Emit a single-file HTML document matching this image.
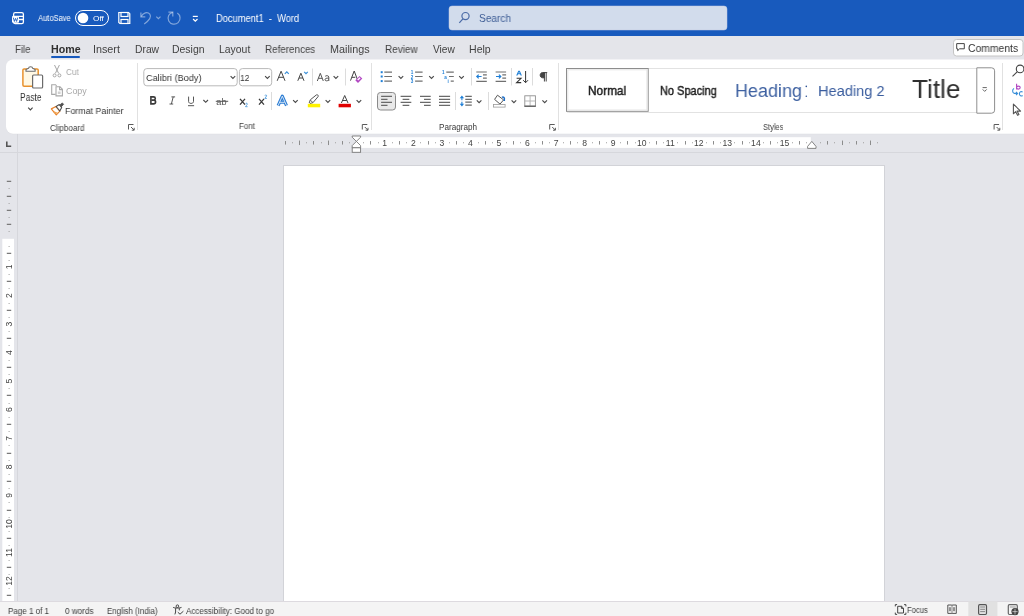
<!DOCTYPE html>
<html><head><meta charset="utf-8"><style>
html,body{margin:0;padding:0}
body{width:1024px;height:616px;overflow:hidden;position:relative;background:#e4e5ea;font-family:"Liberation Sans",sans-serif}
.t{position:absolute;line-height:1;white-space:nowrap;transform-origin:0 0;will-change:transform}
svg{position:absolute;left:0;top:0;will-change:transform}
</style></head><body>
<svg width="1024" height="616" viewBox="0 0 1024 616">
<!-- title bar -->
<rect x="0" y="0" width="1024" height="36" fill="#185abd"/>
<!-- word icon -->
<g fill="none" stroke="#fff" stroke-width="1.3">
<rect x="13.6" y="12.6" width="9.8" height="11" rx="1.6"/>
<path d="M13.6 16.3H23.4M13.6 19.5H23.4"/>
</g>
<rect x="12" y="16" width="7" height="6.8" rx="1" fill="#fff"/>
<path d="M13.3 17.6l1.1 3.8 1.1-3 1.1 3 1.1-3.8" fill="none" stroke="#185abd" stroke-width="0.9"/>
<!-- toggle -->
<rect x="75.5" y="10.5" width="33" height="15" rx="7.5" fill="none" stroke="#fff" stroke-width="1"/>
<circle cx="83" cy="18" r="5.3" fill="#fff"/>
<!-- save -->
<g fill="none" stroke="#fff" stroke-width="1.2">
<path d="M118.8 12.5H128.6L129.8 13.7V23.5H119.9L118.8 22.4Z"/>
<rect x="121" y="12.5" width="7" height="4"/>
<rect x="121" y="19.5" width="7" height="4"/>
</g>
<!-- undo -->
<g fill="none" stroke="#fff" stroke-opacity="0.45" stroke-width="1.2">
<path d="M140.9 12.4V16.8H145.3"/>
<path d="M141.2 16.5C143 12.8 147.5 11.3 149.8 14.2C151.8 16.8 149.5 20 144.2 24"/>
<path d="M156.3 16.6L158.4 18.7L160.5 16.6"/>
<path d="M172.8 12.3A6 6 0 1 0 177.3 13.1"/>
<path d="M168.4 12.1H172.8V16.5"/>
</g>
<g fill="none" stroke="#fff" stroke-width="1.2">
<path d="M192.8 16.4H197.8"/>
<path d="M193.1 19L195.3 21.2L197.5 19"/>
</g>
<!-- search box -->
<rect x="449" y="6" width="278" height="24" rx="3" fill="#d2dcec" stroke="#c0cbe0" stroke-width="0.5"/>
<g fill="none" stroke="#4a6aa6" stroke-width="1.2">
<circle cx="465.5" cy="16.1" r="3.6"/>
<path d="M462.9 18.8L459.3 22.9"/>
</g>

<!-- comments button -->
<rect x="953.5" y="39.5" width="69.5" height="16.5" rx="3" fill="#fff" stroke="#c4c4c4"/>
<path d="M956.7 43.6H964.3V48.8H959.6L957.7 50.6V48.8H956.7Z" fill="none" stroke="#444" stroke-width="1"/>
<!-- home underline -->
<rect x="51" y="56" width="29" height="2" rx="1" fill="#185abd"/>



<!-- ribbon card shadow -->
<rect x="6" y="60" width="1030" height="74.3" rx="7" fill="#dcdde1"/>
<rect x="6" y="59.4" width="1030" height="74.4" rx="7" fill="#fff"/>
<!-- group separators -->
<g stroke="#e1e1e1" stroke-width="1">
<path d="M137.5 63V130M371.5 63V130M558.5 63V130M1002.5 63V130"/>
</g>
<g stroke="#dcdcdc" stroke-width="1">
<path d="M312.5 68.5V85.5M345.5 68.5V85.5M271.5 92V110M455.5 92V110M488.5 92V110M471.5 68V85.5M511.5 68V85.5M532.5 68V85.5"/>
</g>
<!-- dialog launchers -->
<g fill="none" stroke="#5a5a5a" stroke-width="1">
<path id="dl" d="M128.5 129.5V124.5H133.5M131 127L134 130M134.2 127.8V130.2H131.8"/>
<use href="#dl" x="233.8"/>
<use href="#dl" x="421.2"/>
<use href="#dl" x="865.6"/>
</g>

<!-- paste icon -->
<rect x="22.9" y="68.9" width="15.3" height="17.3" rx="1.2" fill="#fff8e4" stroke="#e8912d" stroke-width="1.5"/>
<path d="M26 71.3H35.1V69.5L32.6 68.2C32.6 66.2 28.6 66.2 28.6 68.2L26 69.5Z" fill="#fff" stroke="#6b6b6b" stroke-width="1.1"/>
<rect x="32.6" y="75" width="10" height="13" rx="1" fill="#fff" stroke="#6b6b6b" stroke-width="1.2"/>
<path d="M28.2 107.7L30.4 109.9L32.6 107.7" fill="none" stroke="#444" stroke-width="1.1"/>
<!-- cut -->
<g fill="none" stroke="#a6a6a6" stroke-width="1">
<path d="M54.5 65L58.6 73.3M59.4 65L55.4 73.3"/>
<circle cx="54.6" cy="75.4" r="1.5"/>
<circle cx="59.4" cy="75.4" r="1.5"/>
</g>
<!-- copy -->
<g fill="none" stroke="#a8a8a8" stroke-width="1.1">
<path d="M55.6 94.4H51.7V84.7H55.6L56.6 86"/>
<path d="M56 86.8H60L62.4 89.2V95.9H56Z"/>
<path d="M59.6 86.8V89.6H62.4"/>
</g>
<rect x="57.8" y="91.5" width="2.8" height="2.5" fill="#cfcfcf"/>
<!-- format painter -->
<path d="M51.3 108.9L55.9 106.5L59.9 111.2L56.3 114.8Z" fill="#fff" stroke="#e8822a" stroke-width="1.2" stroke-linejoin="round"/>
<path d="M53.6 111.9L57.6 113.4" stroke="#f0a452" stroke-width="1.3"/>
<path d="M56.1 106.5L59.3 104.5L61.7 107.6L59.8 110.9Z" fill="#fff" stroke="#505050" stroke-width="1.1" stroke-linejoin="round"/>
<path d="M59.7 105.1L62.3 102.9L63.6 104.3L61.3 106.8Z" fill="#505050" stroke="#505050" stroke-width="0.8"/>

<!-- font name box -->
<rect x="143.8" y="68.6" width="93.4" height="17.2" rx="3" fill="#fff" stroke="#b9b9b9"/>
<rect x="239.4" y="68.6" width="32.3" height="17.2" rx="3" fill="#fff" stroke="#b9b9b9"/>
<g fill="none" stroke="#4a4a4a" stroke-width="1.15">
<path id="chv" d="M230.6 76.1L232.9 78.4L235.2 76.1"/>
<use href="#chv" x="34.5"/>
<use href="#chv" x="103" y="0"/>
<use href="#chv" x="-27.2" y="23.9"/>
<use href="#chv" x="62.5" y="24"/>
<use href="#chv" x="95" y="24"/>
<use href="#chv" x="126" y="24"/>
<use href="#chv" x="168" y="0"/>
<use href="#chv" x="198.6" y="0"/>
<use href="#chv" x="228.6" y="0"/>
<use href="#chv" x="246.2" y="24.2"/>
<use href="#chv" x="281" y="24.2"/>
<use href="#chv" x="311.8" y="24.2"/>
</g>
<!-- grow/shrink font -->
<g fill="none" stroke="#444" stroke-width="1">
<path d="M277.2 80.8L281.1 71.2L285 80.8M278.6 77.3H283.6"/>
<path d="M297.8 80.8L300.9 73.2L304 80.8M298.9 78H302.9"/>
</g>
<g fill="none" stroke="#3a8fd8" stroke-width="1.2">
<path d="M284.8 73.8L286.8 71.8L288.8 73.8"/>
<path d="M304.2 71.8L306 73.6L307.8 71.8"/>
</g>
<!-- Aa -->
<g fill="none" stroke="#555" stroke-width="1">
<path d="M317.3 81L320.3 73.3L323.3 81M318.4 78.3H322.2"/>
<path d="M325.2 76.3C326 75.4 328.6 75.3 328.8 77V81M328.8 78.3C326.5 77.8 325 78.5 325 79.7C325 81.2 327.6 81.2 328.8 79.8"/>
</g>
<!-- clear formatting -->
<path d="M350.5 80.6L354.2 71L357.3 79.2M351.8 77.3H355.3" fill="none" stroke="#444" stroke-width="1"/>
<path d="M355.3 80.2L359.6 75.9L362.3 78.6L358 82.9Z" fill="#b146c2"/>
<path d="M357.2 79.6L359.6 77.2L360.6 78.2L358.2 80.6Z" fill="#fff"/>
<!-- B I U ab x2 x2 -->
<path d="M150.9 96.9H153.5C155.9 96.9 155.9 99.9 153.7 100.1C156.3 100.3 156.2 103.9 153.5 103.9H150.9Z M151.8 100.1H153.6" fill="none" stroke="#3a3a3a" stroke-width="1.6"/>
<path d="M171.4 96.9H175.1M169.5 104H173.2M173.2 96.9L171.4 104" fill="none" stroke="#555" stroke-width="1"/>
<path d="M188.6 96.6V101.6C188.6 104 193.5 104 193.5 101.6V96.6M188 105.7H194.1" fill="none" stroke="#555" stroke-width="1"/>
<text x="216.3" y="104.6" font-family="Liberation Sans" font-size="9.2" fill="#555">ab</text>
<path d="M215.8 101.3H228.2" stroke="#555" stroke-width="1"/>
<path d="M240 98.8L245 104.6M245 98.8L240 104.6" fill="none" stroke="#3a3a3a" stroke-width="1.3"/>
<path d="M245.6 103.9C245.9 102.9 247.5 103 247.3 104.2C247.1 105 245.9 105.9 245.5 106.7H247.6" fill="none" stroke="#3a8fd8" stroke-width="0.8"/>
<path d="M259 98.8L264 104.6M264 98.8L259 104.6" fill="none" stroke="#3a3a3a" stroke-width="1.3"/>
<path d="M264.9 95.6C265.2 94.6 266.8 94.7 266.6 95.9C266.4 96.7 265.2 97.6 264.8 98.4H266.9" fill="none" stroke="#3a8fd8" stroke-width="0.8"/>
<!-- text effects -->
<path d="M278.1 105.6L282.3 96.2L286.5 105.6M279.9 102.3H284.7" fill="none" stroke="#2b7cd3" stroke-width="3.1" stroke-linejoin="round"/>
<path d="M278.1 105.6L282.3 96.2L286.5 105.6M279.9 102.3H284.7" fill="none" stroke="#fff" stroke-width="0.8" stroke-linejoin="round"/>
<!-- highlighter -->
<path d="M309.2 103L310.3 99.8L316.4 94.9C317.4 94.2 318.8 95.6 318.1 96.6L313 102.6L309.8 103.6" fill="#fff" stroke="#555" stroke-width="1"/>
<path d="M310.5 100.2L312.8 102.5" stroke="#555" stroke-width="1"/>
<rect x="307.8" y="103.8" width="12.4" height="3.5" fill="#fff200"/>
<!-- font color -->
<path d="M341.4 103L344.7 95.5L348 103M342.6 100.5H346.8" fill="none" stroke="#444" stroke-width="1"/>
<rect x="338.6" y="103.8" width="12.3" height="3.5" fill="#e00000"/>

<!-- bullets -->
<g fill="#1f7fd6">
<rect x="380.7" y="71.2" width="2" height="2"/><rect x="380.7" y="75.5" width="2" height="2"/><rect x="380.7" y="80.1" width="2" height="2"/>
</g>
<g stroke="#707070" stroke-width="1.2">
<path d="M384.3 72.2H392M384.3 76.5H392M384.3 81.1H392"/>
<path d="M415.1 72.2H422.6M415.1 76.5H422.6M415.1 81.1H422.6"/>
<path d="M446.3 72.2H453.8M449 76.5H453.8M450.7 81.1H453.8"/>
</g>
<g fill="#1f7fd6" font-family="Liberation Sans" font-size="4.6" font-weight="bold">
<text x="410.7" y="74">1</text><text x="410.7" y="78.5">2</text><text x="410.7" y="83">3</text>
<text x="441.9" y="74">1</text><text x="444.3" y="78.5">a</text><text x="447.6" y="83">i</text>
</g>
<!-- indent -->
<g stroke="#707070" stroke-width="1.2">
<path d="M476.3 72H486.8M483 74.8H486.8M483 78.2H486.8M476.3 81.3H486.8"/>
<path d="M495.6 72H506.1M502.3 74.8H506.1M502.3 78.2H506.1M495.6 81.3H506.1"/>
</g>
<g fill="none" stroke="#1f7fd6" stroke-width="1.2">
<path d="M476.8 76.5H481.6M478.7 74.6L476.8 76.5L478.7 78.4"/>
<path d="M496 76.5H500.8M498.9 74.6L500.8 76.5L498.9 78.4"/>
</g>
<!-- sort -->
<path d="M516.2 75.6L518.3 70.8H519.8L521.9 75.6H520.6L520.1 74.3H518L517.5 75.6Z M518.4 73.3H519.7L519.05 71.7Z" fill="#1f7fd6"/>
<path d="M516.6 78.3H521L516.6 82.6H521.2" fill="none" stroke="#333" stroke-width="1.1"/>
<path d="M525.6 71V82.6M523.2 80.2L525.6 82.7L528 80.2" fill="none" stroke="#333" stroke-width="1"/>
<!-- pilcrow -->
<path d="M543.5 72.6H547.2M544.4 72.6V81.5M546.2 72.6V81.5M544.4 72.6H542.6C539.4 72.6 539.4 77.8 542.6 77.8H544.4Z" fill="#444" stroke="#444" stroke-width="1"/>
<!-- align -->
<rect x="377.5" y="92.5" width="18" height="17.5" rx="3" fill="#e9e9e9" stroke="#8a8a8a" stroke-width="1"/>
<g stroke="#6a6a6a" stroke-width="1.2">
<path d="M381.1 96.4H392M381.1 99.3H387.5M381.1 102.3H392M381.1 105.3H387.5"/>
<path d="M400.6 96.4H411.3M402.6 99.3H409.3M400.6 102.3H411.3M402.6 105.3H409.3"/>
<path d="M420 96.4H430.7M424 99.3H430.7M420 102.3H430.7M424 105.3H430.7"/>
<path d="M439 96.4H450.1M439 99.3H450.1M439 102.3H450.1M439 105.3H450.1"/>
<path d="M465.3 96.3H471.8M465.3 99.3H471.8M465.3 102.2H471.8M465.3 105.1H471.8"/>
</g>
<g fill="none" stroke="#1f7fd6" stroke-width="1.1">
<path d="M461.9 97.5V100.2M461.9 101.8V104.5"/></g><g fill="#1f7fd6"><path d="M459.7 98.3L461.9 95.6L464.1 98.3Z M459.7 103.7L461.9 106.4L464.1 103.7Z"/>
</g>
<!-- shading -->
<path d="M497.5 95.2L503.6 99.9L500 104.1L494.6 99.4Z" fill="#fff" stroke="#555" stroke-width="1"/>
<path d="M502 97.3C503.6 96.4 504.8 98 504.3 99.8V101" fill="none" stroke="#1f6fc6" stroke-width="1.5"/>
<rect x="493.5" y="104.5" width="11.6" height="2.6" fill="#fff" stroke="#9a9a9a" stroke-width="0.8"/>
<!-- borders -->
<g fill="none" stroke="#8f8f8f" stroke-width="0.9">
<rect x="524.8" y="95.8" width="10.6" height="10.4"/>
<path d="M530.1 95.8V106.2M524.8 101H535.4" stroke="#b0b0b0"/>
</g>
<path d="M524.4 106.2H535.8" stroke="#555" stroke-width="1.2"/>

<!-- styles gallery -->
<rect x="566.5" y="68.5" width="428" height="44" rx="2" fill="#fff" stroke="#e2e2e2"/>
<rect x="566.5" y="68.5" width="81.7" height="42.8" fill="#fff" stroke="#8d8d8d"/>
<rect x="567.8" y="69.8" width="79.1" height="40.2" fill="none" stroke="#e5e5e5"/>
<path d="M976.8 67.8H991.6Q994.6 67.8 994.6 70.8V110.2Q994.6 113.2 991.6 113.2H976.8Z" fill="#fff" stroke="#8f8f8f"/>
<path d="M982.6 87.6H986.8M982.7 89.4L984.7 91.4L986.7 89.4" fill="none" stroke="#555" stroke-width="0.9"/>
<circle cx="806.3" cy="86.4" r="0.8" fill="#2f5496"/><circle cx="806.3" cy="96.3" r="0.8" fill="#2f5496"/>
<!-- find / replace / select -->
<g fill="none" stroke="#444" stroke-width="1.1">
<circle cx="1020.1" cy="68.9" r="3.8"/>
<path d="M1017.4 71.6L1012.5 76.3"/>
<path d="M1013.4 104.2V113.8L1015.7 111.7L1017.6 115.3L1018.9 114.6L1017.1 111.1H1020.6Z" stroke-linejoin="round" stroke="#555"/>
</g>
<g fill="none" stroke="#3a8fd8" stroke-width="1.1">
<path d="M1014 88.4C1012.2 89.6 1012 92.6 1014.3 93.4H1017.6M1016 91.8L1017.6 93.4L1016 95"/>
<path d="M1022.6 92.1C1021.4 91.1 1019.4 91.7 1019.4 93.8C1019.4 95.9 1021.4 96.5 1022.6 95.5"/>
</g>
<path d="M1016.6 83.8V89.4M1016.6 87.6C1016.6 85.6 1020.2 85.6 1020.2 87.6C1020.2 89.6 1016.6 89.6 1016.6 87.6" fill="none" stroke="#b146c2" stroke-width="1.1"/>

<!-- ruler & canvas -->
<path d="M0 152.5H1024" stroke="#d6d7dc"/>
<path d="M17.5 134V601" stroke="#d6d7dc"/>
<rect x="356.5" y="137.2" width="454.3" height="10.7" fill="#fff"/>
<rect x="2.3" y="238.8" width="11.7" height="363" fill="#fff"/>
<!-- page -->
<rect x="283.5" y="165.5" width="601" height="450" fill="#fff" stroke="#d2d3d8"/>
<!-- status bar -->
<rect x="0" y="601" width="1024" height="15" fill="#f4f4f4"/>
<path d="M0 601.5H1024" stroke="#dddadf"/>
<rect x="968.3" y="601.5" width="29.1" height="14.5" fill="#e1e1e1"/>

<path d="M285.5 141.05V144.55M299.5 140.55V145.05M313.5 141.05V144.55M328.5 140.55V145.05M342.5 141.05V144.55M370.5 141.05V144.55M399.5 141.05V144.55M428.5 141.05V144.55M456.5 141.05V144.55M485.5 141.05V144.55M513.5 141.05V144.55M542.5 141.05V144.55M570.5 141.05V144.55M599.5 141.05V144.55M627.5 141.05V144.55M656.5 141.05V144.55M685.5 141.05V144.55M713.5 141.05V144.55M742.5 141.05V144.55M770.5 141.05V144.55M799.5 141.05V144.55M827.5 141.05V144.55M842.5 140.55V145.05M856.5 141.05V144.55M870.5 140.55V145.05" stroke="#8c8c8c" stroke-width="1"/>
<path d="M6.8 180.8h4.4v1.3h-4.4zM6.8 195.8h4.4v1.3h-4.4zM6.8 209.8h4.4v1.3h-4.4zM6.8 223.8h4.4v1.3h-4.4zM6.8 252.8h4.4v1.3h-4.4zM6.8 280.8h4.4v1.3h-4.4zM6.8 309.8h4.4v1.3h-4.4zM6.8 337.8h4.4v1.3h-4.4zM6.8 366.8h4.4v1.3h-4.4zM6.8 394.8h4.4v1.3h-4.4zM6.8 423.8h4.4v1.3h-4.4zM6.8 452.8h4.4v1.3h-4.4zM6.8 480.8h4.4v1.3h-4.4zM6.8 509.8h4.4v1.3h-4.4zM6.8 537.8h4.4v1.3h-4.4zM6.8 566.8h4.4v1.3h-4.4zM6.8 594.8h4.4v1.3h-4.4z" fill="#7a7a7a"/>
<path d="M292 142.3h1v1h-1zM306 142.3h1v1h-1zM321 142.3h1v1h-1zM335 142.3h1v1h-1zM349 142.3h1v1h-1zM363 142.3h1v1h-1zM378 142.3h1v1h-1zM392 142.3h1v1h-1zM406 142.3h1v1h-1zM420 142.3h1v1h-1zM435 142.3h1v1h-1zM449 142.3h1v1h-1zM463 142.3h1v1h-1zM478 142.3h1v1h-1zM492 142.3h1v1h-1zM506 142.3h1v1h-1zM520 142.3h1v1h-1zM535 142.3h1v1h-1zM549 142.3h1v1h-1zM563 142.3h1v1h-1zM577 142.3h1v1h-1zM592 142.3h1v1h-1zM606 142.3h1v1h-1zM620 142.3h1v1h-1zM635 142.3h1v1h-1zM649 142.3h1v1h-1zM663 142.3h1v1h-1zM677 142.3h1v1h-1zM692 142.3h1v1h-1zM706 142.3h1v1h-1zM720 142.3h1v1h-1zM734 142.3h1v1h-1zM749 142.3h1v1h-1zM763 142.3h1v1h-1zM777 142.3h1v1h-1zM792 142.3h1v1h-1zM806 142.3h1v1h-1zM820 142.3h1v1h-1zM834 142.3h1v1h-1zM849 142.3h1v1h-1zM863 142.3h1v1h-1zM877 142.3h1v1h-1zM8.6 188h1v1h-1zM8.6 203h1v1h-1zM8.6 217h1v1h-1zM8.6 231h1v1h-1zM8.6 246h1v1h-1zM8.6 260h1v1h-1zM8.6 274h1v1h-1zM8.6 288h1v1h-1zM8.6 303h1v1h-1zM8.6 317h1v1h-1zM8.6 331h1v1h-1zM8.6 345h1v1h-1zM8.6 360h1v1h-1zM8.6 374h1v1h-1zM8.6 388h1v1h-1zM8.6 403h1v1h-1zM8.6 417h1v1h-1zM8.6 431h1v1h-1zM8.6 445h1v1h-1zM8.6 460h1v1h-1zM8.6 474h1v1h-1zM8.6 488h1v1h-1zM8.6 502h1v1h-1zM8.6 517h1v1h-1zM8.6 531h1v1h-1zM8.6 545h1v1h-1zM8.6 560h1v1h-1zM8.6 574h1v1h-1zM8.6 588h1v1h-1z" fill="#a0a0a0"/>
<g font-family="Liberation Sans" font-size="8.6" fill="#444"><text x="384.75" y="145.9" text-anchor="middle">1</text><text x="413.30" y="145.9" text-anchor="middle">2</text><text x="441.85" y="145.9" text-anchor="middle">3</text><text x="470.40" y="145.9" text-anchor="middle">4</text><text x="498.95" y="145.9" text-anchor="middle">5</text><text x="527.50" y="145.9" text-anchor="middle">6</text><text x="556.05" y="145.9" text-anchor="middle">7</text><text x="584.60" y="145.9" text-anchor="middle">8</text><text x="613.15" y="145.9" text-anchor="middle">9</text><text x="641.70" y="145.9" text-anchor="middle">10</text><text x="670.25" y="145.9" text-anchor="middle">11</text><text x="698.80" y="145.9" text-anchor="middle">12</text><text x="727.35" y="145.9" text-anchor="middle">13</text><text x="755.90" y="145.9" text-anchor="middle">14</text><text x="784.45" y="145.9" text-anchor="middle">15</text><text x="0" y="0" transform="translate(11.9 266.95) rotate(-90)" text-anchor="middle">1</text><text x="0" y="0" transform="translate(11.9 295.50) rotate(-90)" text-anchor="middle">2</text><text x="0" y="0" transform="translate(11.9 324.05) rotate(-90)" text-anchor="middle">3</text><text x="0" y="0" transform="translate(11.9 352.60) rotate(-90)" text-anchor="middle">4</text><text x="0" y="0" transform="translate(11.9 381.15) rotate(-90)" text-anchor="middle">5</text><text x="0" y="0" transform="translate(11.9 409.70) rotate(-90)" text-anchor="middle">6</text><text x="0" y="0" transform="translate(11.9 438.25) rotate(-90)" text-anchor="middle">7</text><text x="0" y="0" transform="translate(11.9 466.80) rotate(-90)" text-anchor="middle">8</text><text x="0" y="0" transform="translate(11.9 495.35) rotate(-90)" text-anchor="middle">9</text><text x="0" y="0" transform="translate(11.9 523.90) rotate(-90)" text-anchor="middle">10</text><text x="0" y="0" transform="translate(11.9 552.45) rotate(-90)" text-anchor="middle">11</text><text x="0" y="0" transform="translate(11.9 581.00) rotate(-90)" text-anchor="middle">12</text></g>
<!-- tab selector -->
<path d="M6.8 141.5V146.2H11.2" fill="none" stroke="#555" stroke-width="1.6"/>
<!-- indent markers -->
<path d="M352.2 136H360.6V137.2L356.4 141.4L352.2 137.2Z M356.4 141.4L360.6 145.6V147.8H352.2V145.6Z" fill="#fff" stroke="#777" stroke-width="0.9"/>
<rect x="352.2" y="147.8" width="8.4" height="4.5" fill="#fff" stroke="#777" stroke-width="0.9"/>
<path d="M807.6 148.4V146.4L811.8 141.4L816 146.4V148.4Z" fill="#fff" stroke="#777" stroke-width="0.9"/>


<!-- accessibility -->
<g fill="none" stroke="#444" stroke-width="1">
<circle cx="177.4" cy="606.2" r="1.3"/>
<path d="M173.2 607.4C174.2 608.3 180.6 608.3 181.5 607.4"/>
<path d="M175.6 608.2V612L174.9 614.4M179.3 608.2V610.4"/>
<path d="M177.8 612.2L180 614.2L183.4 611.2"/>
</g>
<!-- focus -->
<g fill="none" stroke="#444" stroke-width="1">
<path d="M895.3 606.4V604.6H897.1M904.1 604.6H905.9V606.4M905.9 612.6V614.4H904.1M897.1 614.4H895.3V612.6"/>
<path d="M897.7 606.3H901.6L903.5 608.2V613H897.7Z"/>
<path d="M901.4 606.3V608.4H903.5"/>
</g>
<!-- read mode -->
<g fill="none" stroke="#555" stroke-width="1">
<path d="M947.8 605H951.8L952 605.5L952.2 605H956.3V613.4H952.2L952 614L951.8 613.4H947.8Z"/>
<path d="M952 605.5V613.4M949.4 607.2V611.2M950.4 607.2V611.2M953.6 607.2V611.2M954.6 607.2V611.2" stroke="#888"/>
</g>
<!-- print layout -->
<rect x="978.6" y="604.7" width="7.9" height="9.8" rx="1.2" fill="none" stroke="#555" stroke-width="1.2"/>
<path d="M980.2 607H985M980.2 609.3H985M980.2 611.6H985" stroke="#888" stroke-width="1"/>
<!-- web layout -->
<rect x="1008.3" y="604.7" width="9" height="9.8" rx="1.2" fill="none" stroke="#666" stroke-width="1.2"/>
<path d="M1009.8 607H1015.8" stroke="#999" stroke-width="1"/>
<circle cx="1015" cy="611.6" r="3.6" fill="#444"/>
<path d="M1015 608.8V614.4M1012.4 611.6H1017.6" stroke="#f3f3f3" stroke-width="0.6"/>
</svg>

<div class="t" id="t0" style="left:37.52px;top:15.48px;font-size:8.28px;color:#ffffff;transform:scaleX(0.913);">AutoSave</div>
<div class="t" id="t1" style="left:92.67px;top:14.92px;font-size:7.99px;color:#ffffff;transform:scaleX(1.033);">Off</div>
<div class="t" id="t2" style="left:215.92px;top:14.42px;font-size:10.03px;color:#ffffff;transform:scaleX(0.930);">Document1&nbsp;&nbsp;-&nbsp;&nbsp;Word</div>
<div class="t" id="t3" style="left:478.57px;top:13.61px;font-size:10.32px;color:#3f5e96;transform:scaleX(0.980);">Search</div>
<div class="t" id="t4" style="left:14.70px;top:44.79px;font-size:10.17px;color:#424242;transform:scaleX(0.944);">File</div>
<div class="t" id="t5" style="left:50.54px;top:44.79px;font-size:10.17px;color:#303030;font-weight:bold;transform:scaleX(1.050);">Home</div>
<div class="t" id="t6" style="left:93.05px;top:44.79px;font-size:10.17px;color:#424242;transform:scaleX(1.061);">Insert</div>
<div class="t" id="t7" style="left:134.68px;top:44.79px;font-size:10.17px;color:#424242;transform:scaleX(1.015);">Draw</div>
<div class="t" id="t8" style="left:172.32px;top:44.79px;font-size:10.17px;color:#424242;transform:scaleX(1.029);">Design</div>
<div class="t" id="t9" style="left:219.34px;top:44.79px;font-size:10.17px;color:#424242;transform:scaleX(1.026);">Layout</div>
<div class="t" id="t10" style="left:265.37px;top:44.79px;font-size:10.17px;color:#424242;transform:scaleX(0.969);">References</div>
<div class="t" id="t11" style="left:330.46px;top:44.79px;font-size:10.17px;color:#424242;transform:scaleX(1.064);">Mailings</div>
<div class="t" id="t12" style="left:384.54px;top:44.79px;font-size:10.17px;color:#424242;transform:scaleX(0.981);">Review</div>
<div class="t" id="t13" style="left:432.84px;top:44.79px;font-size:10.17px;color:#424242;">View</div>
<div class="t" id="t14" style="left:468.63px;top:44.79px;font-size:10.17px;color:#424242;transform:scaleX(1.040);">Help</div>
<div class="t" id="t15" style="left:968.33px;top:43.11px;font-size:10.61px;color:#333333;transform:scaleX(0.977);">Comments</div>
<div class="t" id="t16" style="left:19.83px;top:93.26px;font-size:10.03px;color:#333333;transform:scaleX(0.840);">Paste</div>
<div class="t" id="t17" style="left:66.43px;top:67.50px;font-size:9.30px;color:#a8a8a8;transform:scaleX(0.880);">Cut</div>
<div class="t" id="t18" style="left:66.41px;top:86.62px;font-size:8.87px;color:#a8a8a8;transform:scaleX(0.979);">Copy</div>
<div class="t" id="t19" style="left:65.46px;top:106.71px;font-size:9.30px;color:#333333;transform:scaleX(0.951);">Format Painter</div>
<div class="t" id="t20" style="left:49.79px;top:123.64px;font-size:8.43px;color:#3a3a3a;transform:scaleX(0.957);">Clipboard</div>
<div class="t" id="t21" style="left:145.56px;top:73.05px;font-size:9.88px;color:#333333;transform:scaleX(0.929);">Calibri (Body)</div>
<div class="t" id="t22" style="left:240.17px;top:72.55px;font-size:9.88px;color:#333333;transform:scaleX(0.863);">12</div>
<div class="t" id="t23" style="left:239.02px;top:123.46px;font-size:8.28px;color:#3a3a3a;transform:scaleX(0.956);">Font</div>
<div class="t" id="t24" style="left:439.36px;top:124.49px;font-size:8.14px;color:#3a3a3a;transform:scaleX(0.989);">Paragraph</div>
<div class="t" id="t25" style="left:763.17px;top:123.28px;font-size:8.43px;color:#3a3a3a;transform:scaleX(0.889);">Styles</div>
<div class="t" id="t26" style="left:588.04px;top:85.91px;font-size:11.92px;color:#1e1e1e;transform:scaleX(0.994);-webkit-text-stroke:0.45px #1e1e1e;">Normal</div>
<div class="t" id="t27" style="left:660.44px;top:85.91px;font-size:11.92px;color:#1e1e1e;transform:scaleX(0.922);-webkit-text-stroke:0.45px #1e1e1e;">No Spacing</div>
<div style="position:absolute;left:0;top:0;width:807px;height:616px;overflow:hidden"><div class="t" id="t28" style="left:734.76px;top:80.52px;font-size:19.19px;color:#3f62a2;transform:scaleX(0.937);">Heading 1</div></div>
<div class="t" id="t29" style="left:818.49px;top:83.43px;font-size:15.26px;color:#3a5d9e;transform:scaleX(0.958);">Heading 2</div>
<div class="t" id="t30" style="left:911.51px;top:76.41px;font-size:26.60px;color:#2e2e2e;transform:scaleX(0.983);">Title</div>
<div class="t" id="t31" style="left:7.85px;top:606.65px;font-size:8.58px;color:#3c3c3c;transform:scaleX(0.936);">Page 1 of 1</div>
<div class="t" id="t32" style="left:64.76px;top:606.65px;font-size:8.58px;color:#3c3c3c;transform:scaleX(0.949);">0 words</div>
<div class="t" id="t33" style="left:107.36px;top:606.65px;font-size:8.58px;color:#3c3c3c;transform:scaleX(0.920);">English (India)</div>
<div class="t" id="t34" style="left:185.84px;top:606.65px;font-size:8.58px;color:#3c3c3c;transform:scaleX(0.937);">Accessibility: Good to go</div>
<div class="t" id="t35" style="left:907.07px;top:606.13px;font-size:8.58px;color:#3c3c3c;transform:scaleX(0.889);">Focus</div>
</body></html>
